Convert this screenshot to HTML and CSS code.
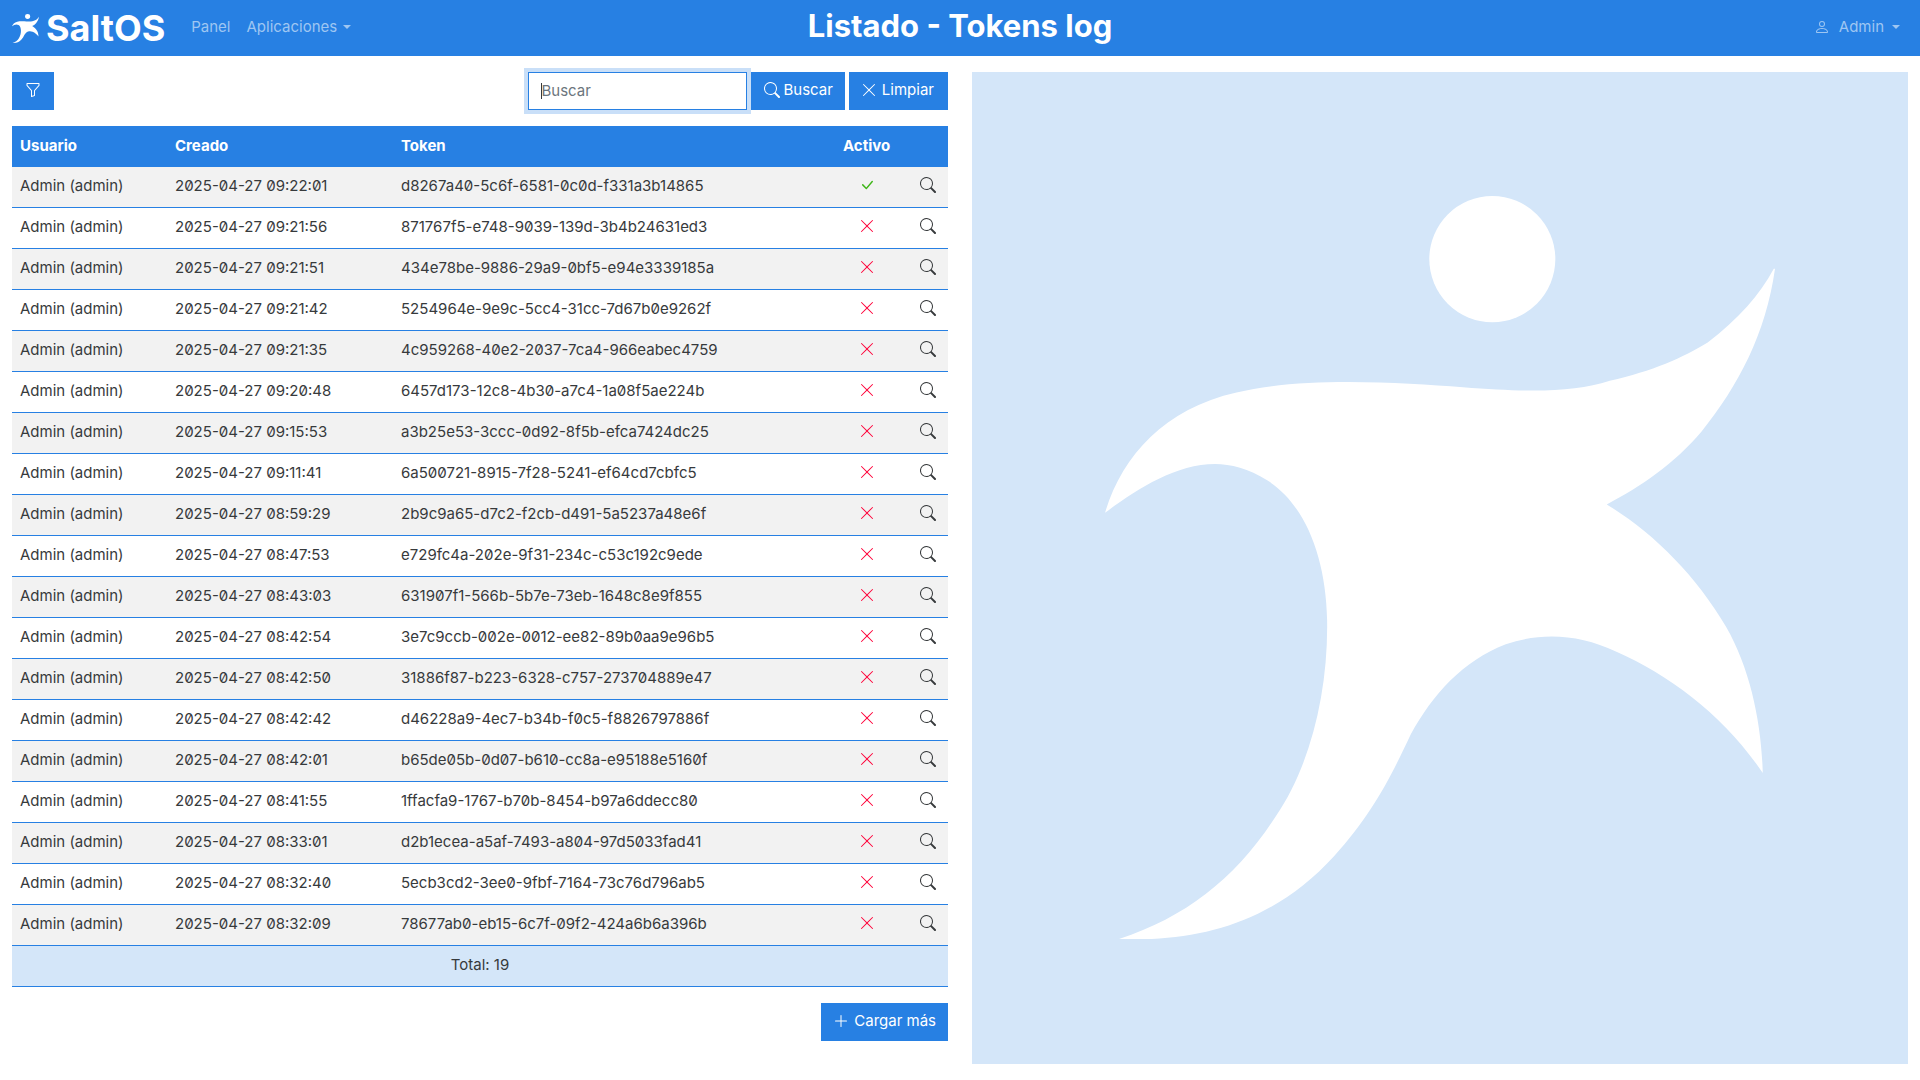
FILE: index.html
```html
<!DOCTYPE html>
<html lang="en">
<head>
    <meta charset="UTF-8">
    <meta name="viewport" content="width=device-width, initial-scale=1.0">
    <title>Listado - Tokens log</title>
    <link rel="stylesheet" href="styles.css">
</head>
<body>
    <svg class="icon-defs" aria-hidden="true">
        <symbol id="i-search" viewBox="0 0 16 16"><path d="M11.742 10.344a6.5 6.5 0 1 0-1.397 1.398h-.001c.03.04.062.078.098.115l3.85 3.85a1 1 0 0 0 1.415-1.414l-3.85-3.85a1.007 1.007 0 0 0-.115-.1zM12 6.5a5.5 5.5 0 1 1-11 0 5.5 5.5 0 0 1 11 0z"/></symbol>
        <symbol id="i-x" viewBox="0 0 16 16"><path d="M2.146 2.854a.5.5 0 1 1 .708-.708L8 7.293l5.146-5.147a.5.5 0 0 1 .708.708L8.707 8l5.147 5.146a.5.5 0 0 1-.708.708L8 8.707l-5.146 5.147a.5.5 0 0 1-.708-.708L7.293 8 2.146 2.854Z"/></symbol>
        <symbol id="i-check" viewBox="0 0 16 16"><path d="M12.736 3.97a.733.733 0 0 1 1.047 0c.286.289.29.756.01 1.05L7.88 12.01a.733.733 0 0 1-1.065.02L3.217 8.384a.757.757 0 0 1 0-1.06.733.733 0 0 1 1.047 0l3.052 3.093 5.4-6.425a.247.247 0 0 1 .02-.022Z"/></symbol>
        <symbol id="i-funnel" viewBox="0 0 16 16"><path d="M1.5 1.5A.5.5 0 0 1 2 1h12a.5.5 0 0 1 .5.5v2a.5.5 0 0 1-.128.334L10 8.692V13.5a.5.5 0 0 1-.342.474l-3 1A.5.5 0 0 1 6 14.5V8.692L1.628 3.834A.5.5 0 0 1 1.5 3.5v-2zm1 .5v1.308l4.372 4.858A.5.5 0 0 1 7 8.5v5.306l2-.666V8.5a.5.5 0 0 1 .128-.334L13.5 3.308V2h-11z"/></symbol>
        <symbol id="i-person" viewBox="0 0 16 16"><path d="M8 8a3 3 0 1 0 0-6 3 3 0 0 0 0 6Zm2-3a2 2 0 1 1-4 0 2 2 0 0 1 4 0Zm4 8c0 1-1 1-1 1H3s-1 0-1-1 1-4 6-4 6 3 6 4Zm-1-.004c-.001-.246-.154-.986-.832-1.664C11.516 10.68 10.289 10 8 10c-2.29 0-3.516.68-4.168 1.332-.678.678-.83 1.418-.832 1.664h10Z"/></symbol>
        <symbol id="i-plus" viewBox="0 0 16 16"><path d="M8 2a.5.5 0 0 1 .5.5v5h5a.5.5 0 0 1 0 1h-5v5a.5.5 0 0 1-1 0v-5h-5a.5.5 0 0 1 0-1h5v-5A.5.5 0 0 1 8 2Z"/></symbol>
        <symbol id="i-logo" viewBox="235 208 1095 1142" preserveAspectRatio="none">
            <ellipse cx="868" cy="305" rx="103" ry="97"/>
            <path d="M235 695C262 610 330 535 450 510C560 485 720 495 820 502C930 510 1000 510 1060 492C1130 477 1180 456 1220 433C1270 398 1305 360 1328 320L1330 320C1315 420 1270 500 1210 570C1165 620 1110 655 1055 682C1130 725 1200 790 1250 870C1290 935 1308 1020 1310 1095C1250 1010 1160 945 1070 908C1010 882 950 878 890 897C820 922 770 975 735 1035C700 1105 670 1160 610 1222C510 1325 390 1355 258 1350C370 1315 450 1255 515 1160C570 1085 600 970 598 860C596 760 560 680 500 645C470 627 440 620 415 620C350 620 285 660 235 695Z"/>
        </symbol>
    </svg>

    <nav class="navbar">
        <div class="navbar-left">
            <a class="brand" href="#"><svg class="brand-logo"><use href="#i-logo"/></svg>SaltOS</a>
            <a class="nav-link" href="#">Panel</a>
            <a class="nav-link" href="#">Aplicaciones<span class="caret"></span></a>
        </div>
        <h1 class="page-title">Listado - Tokens log</h1>
        <div class="navbar-right">
            <a class="nav-link" href="#"><svg class="icon user-icon"><use href="#i-person"/></svg>Admin<span class="caret"></span></a>
        </div>
    </nav>

    <main class="layout">
        <section class="list-col">
            <div class="toolbar">
                <button class="btn btn-icon" type="button"><svg class="icon"><use href="#i-funnel"/></svg></button>
                <form class="search">
                    <div class="search-field">
                        <input class="search-input" type="text" placeholder="Buscar">
                        <span class="search-caret"></span>
                    </div>
                    <button class="btn btn-search" type="button"><svg class="icon"><use href="#i-search"/></svg>Buscar</button>
                    <button class="btn btn-clear" type="button"><svg class="icon"><use href="#i-x"/></svg>Limpiar</button>
                </form>
            </div>

            <table class="log-table">
                <colgroup>
                    <col class="col-user">
                    <col class="col-date">
                    <col class="col-token">
                    <col class="col-active">
                    <col class="col-view">
                </colgroup>
                <thead>
                    <tr><th>Usuario</th><th>Creado</th><th>Token</th><th class="center">Activo</th><th></th></tr>
                </thead>
                <tbody>
                    <tr><td>Admin (admin)</td><td>2025-04-27 09:22:01</td><td>d8267a40-5c6f-6581-0c0d-f331a3b14865</td><td class="center"><svg class="icon yes"><use href="#i-check"/></svg></td><td class="view"><svg class="icon"><use href="#i-search"/></svg></td></tr>
                    <tr><td>Admin (admin)</td><td>2025-04-27 09:21:56</td><td>871767f5-e748-9039-139d-3b4b24631ed3</td><td class="center"><svg class="icon no"><use href="#i-x"/></svg></td><td class="view"><svg class="icon"><use href="#i-search"/></svg></td></tr>
                    <tr><td>Admin (admin)</td><td>2025-04-27 09:21:51</td><td>434e78be-9886-29a9-0bf5-e94e3339185a</td><td class="center"><svg class="icon no"><use href="#i-x"/></svg></td><td class="view"><svg class="icon"><use href="#i-search"/></svg></td></tr>
                    <tr><td>Admin (admin)</td><td>2025-04-27 09:21:42</td><td>5254964e-9e9c-5cc4-31cc-7d67b0e9262f</td><td class="center"><svg class="icon no"><use href="#i-x"/></svg></td><td class="view"><svg class="icon"><use href="#i-search"/></svg></td></tr>
                    <tr><td>Admin (admin)</td><td>2025-04-27 09:21:35</td><td>4c959268-40e2-2037-7ca4-966eabec4759</td><td class="center"><svg class="icon no"><use href="#i-x"/></svg></td><td class="view"><svg class="icon"><use href="#i-search"/></svg></td></tr>
                    <tr><td>Admin (admin)</td><td>2025-04-27 09:20:48</td><td>6457d173-12c8-4b30-a7c4-1a08f5ae224b</td><td class="center"><svg class="icon no"><use href="#i-x"/></svg></td><td class="view"><svg class="icon"><use href="#i-search"/></svg></td></tr>
                    <tr><td>Admin (admin)</td><td>2025-04-27 09:15:53</td><td>a3b25e53-3ccc-0d92-8f5b-efca7424dc25</td><td class="center"><svg class="icon no"><use href="#i-x"/></svg></td><td class="view"><svg class="icon"><use href="#i-search"/></svg></td></tr>
                    <tr><td>Admin (admin)</td><td>2025-04-27 09:11:41</td><td>6a500721-8915-7f28-5241-ef64cd7cbfc5</td><td class="center"><svg class="icon no"><use href="#i-x"/></svg></td><td class="view"><svg class="icon"><use href="#i-search"/></svg></td></tr>
                    <tr><td>Admin (admin)</td><td>2025-04-27 08:59:29</td><td>2b9c9a65-d7c2-f2cb-d491-5a5237a48e6f</td><td class="center"><svg class="icon no"><use href="#i-x"/></svg></td><td class="view"><svg class="icon"><use href="#i-search"/></svg></td></tr>
                    <tr><td>Admin (admin)</td><td>2025-04-27 08:47:53</td><td>e729fc4a-202e-9f31-234c-c53c192c9ede</td><td class="center"><svg class="icon no"><use href="#i-x"/></svg></td><td class="view"><svg class="icon"><use href="#i-search"/></svg></td></tr>
                    <tr><td>Admin (admin)</td><td>2025-04-27 08:43:03</td><td>631907f1-566b-5b7e-73eb-1648c8e9f855</td><td class="center"><svg class="icon no"><use href="#i-x"/></svg></td><td class="view"><svg class="icon"><use href="#i-search"/></svg></td></tr>
                    <tr><td>Admin (admin)</td><td>2025-04-27 08:42:54</td><td>3e7c9ccb-002e-0012-ee82-89b0aa9e96b5</td><td class="center"><svg class="icon no"><use href="#i-x"/></svg></td><td class="view"><svg class="icon"><use href="#i-search"/></svg></td></tr>
                    <tr><td>Admin (admin)</td><td>2025-04-27 08:42:50</td><td>31886f87-b223-6328-c757-273704889e47</td><td class="center"><svg class="icon no"><use href="#i-x"/></svg></td><td class="view"><svg class="icon"><use href="#i-search"/></svg></td></tr>
                    <tr><td>Admin (admin)</td><td>2025-04-27 08:42:42</td><td>d46228a9-4ec7-b34b-f0c5-f8826797886f</td><td class="center"><svg class="icon no"><use href="#i-x"/></svg></td><td class="view"><svg class="icon"><use href="#i-search"/></svg></td></tr>
                    <tr><td>Admin (admin)</td><td>2025-04-27 08:42:01</td><td>b65de05b-0d07-b610-cc8a-e95188e5160f</td><td class="center"><svg class="icon no"><use href="#i-x"/></svg></td><td class="view"><svg class="icon"><use href="#i-search"/></svg></td></tr>
                    <tr><td>Admin (admin)</td><td>2025-04-27 08:41:55</td><td>1ffacfa9-1767-b70b-8454-b97a6ddecc80</td><td class="center"><svg class="icon no"><use href="#i-x"/></svg></td><td class="view"><svg class="icon"><use href="#i-search"/></svg></td></tr>
                    <tr><td>Admin (admin)</td><td>2025-04-27 08:33:01</td><td>d2b1ecea-a5af-7493-a804-97d5033fad41</td><td class="center"><svg class="icon no"><use href="#i-x"/></svg></td><td class="view"><svg class="icon"><use href="#i-search"/></svg></td></tr>
                    <tr><td>Admin (admin)</td><td>2025-04-27 08:32:40</td><td>5ecb3cd2-3ee0-9fbf-7164-73c76d796ab5</td><td class="center"><svg class="icon no"><use href="#i-x"/></svg></td><td class="view"><svg class="icon"><use href="#i-search"/></svg></td></tr>
                    <tr><td>Admin (admin)</td><td>2025-04-27 08:32:09</td><td>78677ab0-eb15-6c7f-09f2-424a6b6a396b</td><td class="center"><svg class="icon no"><use href="#i-x"/></svg></td><td class="view"><svg class="icon"><use href="#i-search"/></svg></td></tr>
                </tbody>
                <tfoot>
                    <tr><td colspan="5">Total: 19</td></tr>
                </tfoot>
            </table>

            <div class="more">
                <button class="btn" type="button"><svg class="icon"><use href="#i-plus"/></svg>Cargar más</button>
            </div>
        </section>

        <aside class="logo-panel">
            <svg class="logo-big"><use href="#i-logo"/></svg>
        </aside>
    </main>
</body>
</html>
```

FILE: styles.css
```css
/* Base */
* {
    box-sizing: border-box;
}
html, body {
    height: 100%;
}
body {
    margin: 0;
    font-family: Inter, "Noto Sans", sans-serif;
    font-size: 15px;
    line-height: 24px;
    font-feature-settings: "zero" 1;
    color: #373a3c;
    background-color: #fff;
    overflow: hidden;
}
.icon-defs {
    display: none;
}
.icon {
    width: 16px;
    height: 16px;
    fill: currentColor;
    flex: none;
}

/* Navbar */
.navbar {
    display: grid;
    grid-template-columns: 1fr auto 1fr;
    align-items: center;
    height: 56px;
    padding: 0 12px;
    background-color: #2780e3;
}
.navbar-left {
    display: flex;
    align-items: center;
}
.navbar-right {
    display: flex;
    justify-content: flex-end;
    padding-right: 8px;
}
.brand {
    display: flex;
    align-items: center;
    gap: 7px;
    margin-right: 26px;
    font-size: 36px;
    font-weight: 700;
    color: #fff;
    text-decoration: none;
}
.brand-logo {
    width: 27px;
    height: 29px;
    fill: #fff;
}
.nav-link {
    display: flex;
    align-items: center;
    margin-right: 16px;
    padding-bottom: 2px;
    color: #9ec6f2;
    text-decoration: none;
}
.navbar-right .nav-link {
    margin-right: 0;
}
.caret {
    width: 0;
    height: 0;
    margin-left: 6px;
    border-top: 4.5px solid currentColor;
    border-left: 4.5px solid transparent;
    border-right: 4.5px solid transparent;
}
.navbar-right .caret {
    margin-left: 8px;
}
.user-icon {
    margin-right: 9px;
}
.page-title {
    margin: 0;
    padding-bottom: 4px;
    font-size: 31px;
    line-height: 40px;
    font-weight: 700;
    color: #fff;
}

/* Page columns */
.layout {
    display: grid;
    grid-template-columns: 936px 936px;
    column-gap: 24px;
    padding: 16px 12px;
    height: calc(100% - 56px);
}
.toolbar {
    display: flex;
    justify-content: space-between;
    margin-bottom: 16px;
}
.search {
    display: flex;
    gap: 4px;
}
.search-field {
    position: relative;
}
.search-input {
    display: block;
    width: 219px;
    height: 38px;
    padding: 5px 12px 7px;
    font: inherit;
    color: #373a3c;
    border: 1px solid #2780e3;
    border-radius: 0;
    outline: none;
    box-shadow: 0 0 0 4px #c9dff8;
}
.search-input::placeholder {
    color: #6c757d;
}
.search-caret {
    position: absolute;
    left: 13px;
    top: 11px;
    width: 1px;
    height: 16px;
    background-color: #373a3c;
}
.btn {
    display: inline-flex;
    align-items: center;
    gap: 5px;
    height: 38px;
    padding: 0 12px 2px;
    font: inherit;
    color: #fff;
    background-color: #2780e3;
    border: none;
    position: relative;
}
.btn-icon {
    width: 42px;
    justify-content: center;
    padding: 0 0 2px;
}
.btn-search {
    gap: 3px;
    padding-left: 13px;
}
.btn-clear {
    padding-right: 14px;
}

/* Table */
.log-table {
    width: 100%;
    border-collapse: separate;
    border-spacing: 0;
    table-layout: fixed;
}
.col-user {
    width: 155px;
}
.col-date {
    width: 226px;
}
.col-active {
    width: 63px;
}
.col-view {
    width: 50px;
}
.log-table th {
    height: 41px;
    padding: 7px 8px 9px;
    text-align: left;
    font-weight: 700;
    color: #fff;
    background-color: #2780e3;
}
.log-table td {
    height: 41px;
    padding: 7px 8px 9px;
    border-bottom: 1px solid #2780e3;
}
.log-table tbody tr:nth-child(odd) {
    background-color: #f2f2f2;
}
.log-table .center {
    text-align: center;
}
.log-table td .icon {
    display: block;
    margin: 0 auto 2px;
}
.log-table td.view {
    padding-right: 12px;
}
.log-table td.view .icon {
    margin: 0 0 2px auto;
}
.yes {
    color: #3fb618;
}
.no {
    color: #ff0039;
}
.log-table tfoot td {
    text-align: center;
    background-color: #d4e6f9;
}
.more {
    display: flex;
    justify-content: flex-end;
    margin-top: 16px;
}

/* Big logo on the right */
.logo-panel {
    display: flex;
    align-items: center;
    justify-content: center;
    background-color: #d4e6f9;
}
.logo-big {
    width: 670px;
    height: 743px;
    margin-bottom: 2px;
    fill: #fff;
}
```
